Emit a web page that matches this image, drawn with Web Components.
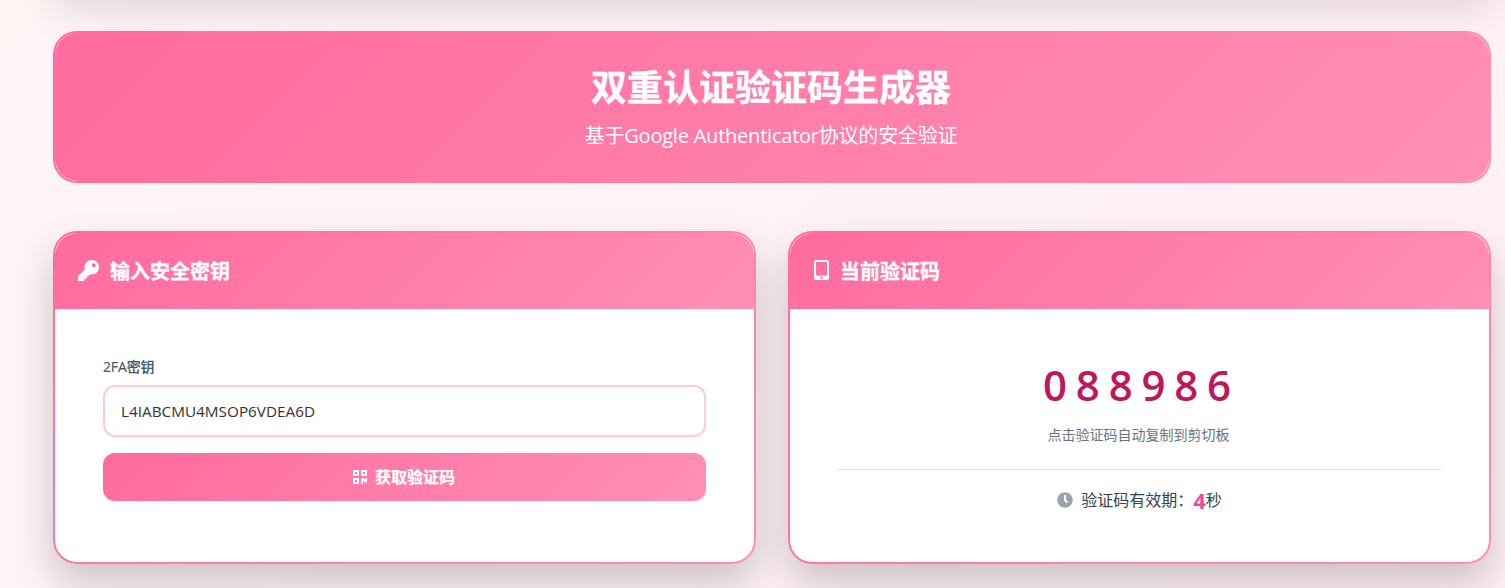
<!DOCTYPE html>
<html lang="zh"><head><meta charset="utf-8"><title>2FA</title>
<style>
html,body{margin:0;height:100%;overflow:hidden}
body{background:linear-gradient(135deg,#fff5f5,#fff0f5);font-family:"Open Sans","Noto Sans CJK SC",sans-serif;}
</style></head><body>
<tfa-app></tfa-app>
<template id="t-app"><style>
:host{display:flex;flex-direction:column;padding:0 14px 0 53px;height:588px;box-sizing:border-box;overflow:hidden}
.top{height:100px;margin-top:-110px;box-shadow:0 20px 40px rgba(0,0,0,.12);flex:none}
.grid{display:grid;grid-template-columns:1fr 1fr;gap:32px;margin-top:48px;flex:none}
tfa-hero{margin-top:41px}
</style><div class="top"></div><tfa-hero></tfa-hero><div class="grid"><tfa-key-card></tfa-key-card><tfa-code-card></tfa-code-card></div></template>

<template id="t-hero"><style>
:host{display:block}
.o{background:linear-gradient(#ffd9e6,#ffd9e6) padding-box,linear-gradient(135deg,#ff6b9d,#ff8fb5) border-box;border:2px solid transparent;border-radius:24px;overflow:hidden;height:152px;box-sizing:border-box}
.i{height:100%;background:linear-gradient(135deg,#ff6b9d,#ff8fb5);border-radius:23px;color:#fff;text-align:center;box-sizing:border-box;padding-top:29px;padding-right:2px}
h1{margin:0;font:700 36px/52px "Open Sans","Noto Sans CJK SC",sans-serif;-webkit-text-stroke:.3px #fff}
p{margin:8px 0 0;font:400 20px/28px "Open Sans","Noto Sans CJK SC",sans-serif;letter-spacing:-.22px}
</style><div class="o"><div class="i"><h1>双重认证验证码生成器</h1><p>基于Google Authenticator协议的安全验证</p></div></div></template>

<template id="t-card"><style>
:host{display:block;height:333px;box-sizing:border-box;background:linear-gradient(#fff,#fff) padding-box,linear-gradient(135deg,#ff6b9d,#ff8fb5) border-box;border:2px solid transparent;border-radius:24px;box-shadow:0 20px 40px rgba(0,0,0,.2);overflow:hidden}
.h{height:76px;box-sizing:border-box;padding:2px 0 0 var(--pad,23px);background:linear-gradient(135deg,#ff6b9d,#ff8fb5);border-radius:23px 23px 0 0;color:#fff;display:flex;align-items:center;gap:11px;font:700 20px/28px "Open Sans","Noto Sans CJK SC",sans-serif;-webkit-text-stroke:.3px #fff}
::slotted(svg){display:block;fill:#fff;margin-top:-4px}
</style><div class="h"><slot name="icon"></slot><slot name="title"></slot></div><slot></slot></template>

<template id="t-key"><style>
:host{display:block}
.b{padding:48px 48px 0;}
label{display:block;font:500 14px/20px "Open Sans","Noto Sans CJK SC",sans-serif;color:#4b5563;margin:0 0 8px;letter-spacing:-.15px;-webkit-text-stroke:.15px #4b5563}
.inp{height:52px;box-sizing:border-box;border:2px solid #ffccd0;border-radius:12px;padding:0 16px;display:flex;align-items:center;font:400 15.3px/20px "Open Sans","Noto Sans CJK SC",sans-serif;color:#333}
.btn{height:48px;margin-top:16px;border-radius:12px;background:linear-gradient(135deg,#ff6b9d,#ff8fb5);color:#fff;display:flex;align-items:center;justify-content:center;gap:7px;font:700 16px/24px "Open Sans","Noto Sans CJK SC",sans-serif;-webkit-text-stroke:.25px #fff;padding-right:2px}
svg{fill:#fff;display:block}
</style><tfa-card><svg slot="icon" width="21" height="21" viewBox="0 0 512 512"><path d="M512 176.001C512 273.203 433.202 352 336 352c-11.22 0-22.19-1.062-32.827-3.069l-24.012 27.014A23.999 23.999 0 0 1 261.223 384H224v40c0 13.255-10.745 24-24 24h-40v40c0 13.255-10.745 24-24 24H24c-13.255 0-24-10.745-24-24v-78.059c0-6.365 2.529-12.47 7.029-16.971l161.802-161.802C163.108 213.814 160 195.271 160 176 160 78.798 238.797.001 335.999 0 433.488-.001 512 78.511 512 176.001zM336 128c0 26.51 21.49 48 48 48s48-21.49 48-48-21.49-48-48-48-48 21.49-48 48z"/></svg><span slot="title">输入安全密钥</span><div class="b"><label>2FA密钥</label><div class="inp">L4IABCMU4MSOP6VDEA6D</div><div class="btn"><svg width="16" height="16" viewBox="0 0 448 512"><path d="M0 224h192V32H0v192zM64 96h64v64H64V96zm192-64v192h192V32H256zm128 128h-64V96h64v64zM0 480h192V288H0v192zm64-128h64v64H64v-64zm352-64h32v128h-96v-32h-32v96h-64V288h96v32h64v-32zm0 160h32v32h-32v-32zm-64 0h32v32h-32v-32z"/></svg><span>获取验证码</span></div></div></tfa-card></template>

<template id="t-code"><style>
:host{display:block}
.b{padding:46px 48px 0;text-align:center}
.code{font:600 42px/60px "Open Sans","Noto Sans CJK SC",sans-serif;color:#be185d;letter-spacing:8.8px;padding-left:4px}
.hint{font:400 14px/20px "Open Sans","Noto Sans CJK SC",sans-serif;color:#6b7280;margin-top:10px;padding-right:2px}
.t{margin-top:24px;border-top:1px solid #fbcfe8;padding-top:18px;display:flex;align-items:center;justify-content:center;font:400 16px/24px "Open Sans","Noto Sans CJK SC",sans-serif;color:#374151}
.t svg{fill:#9ca3af;display:block;margin-right:8px}
b{font-size:22px;font-weight:700;color:#ec4899;}
</style><tfa-card style="--pad:24px"><svg slot="icon" width="15" height="20" viewBox="0 0 15 20"><path fill-rule="evenodd" d="M2.500 0h10A2.500 2.500 0 0 1 15 2.500v15a2.500 2.500 0 0 1-2.500 2.500h-10A2.500 2.500 0 0 1 0 17.500v-15A2.500 2.500 0 0 1 2.500 0zM2 2v13.500h11V2zM6.300 17.700a1.200 1.200 0 1 0 2.400 0a1.200 1.200 0 1 0-2.400 0z"/></svg><span slot="title">当前验证码</span><div class="b"><div class="code">088986</div><div class="hint">点击验证码自动复制到剪切板</div><div class="t"><svg width="16" height="16" viewBox="0 0 512 512"><path d="M256 8C119 8 8 119 8 256s111 248 248 248 248-111 248-248S393 8 256 8zm92.490 313l-20 25a16 16 0 0 1-22.490 2.500l-67-49.720a40 40 0 0 1-15-31.230V112a16 16 0 0 1 16-16h32a16 16 0 0 1 16 16v144l58 42.500a16 16 0 0 1 2.490 22.500z"/></svg><span>验证码有效期：</span><b>4</b><span>秒</span></div></div></tfa-card></template>

<script>
function def(tag,id){customElements.define(tag,class extends HTMLElement{constructor(){super();this.attachShadow({mode:"open"}).appendChild(document.getElementById(id).content.cloneNode(true));}});}
def("tfa-card","t-card");def("tfa-hero","t-hero");def("tfa-key-card","t-key");def("tfa-code-card","t-code");def("tfa-app","t-app");
</script></body></html>
